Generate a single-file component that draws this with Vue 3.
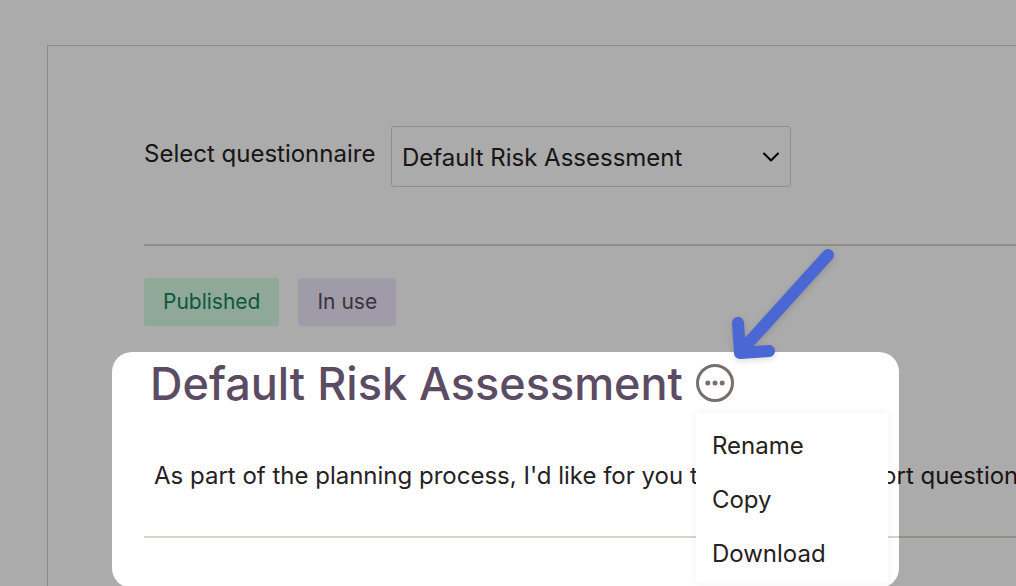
<script setup>
import { ref } from "vue";

const questionnaires = ["Default Risk Assessment"];
const selected = ref(questionnaires[0]);
const menuOpen = ref(true);
const actions = ["Rename", "Copy", "Download"];
</script>

<template>
  <main class="page">
    <div class="card">
      <div class="picker">
        <label class="picker-label" for="questionnaire">Select questionnaire</label>
        <div class="select-wrap">
          <select id="questionnaire" v-model="selected" class="select">
            <option v-for="name in questionnaires" :key="name">{{ name }}</option>
          </select>
          <svg class="chevron" viewBox="0 0 18 12" aria-hidden="true">
            <path d="M2 2.5 L9 9.5 L16 2.5" />
          </svg>
        </div>
      </div>

      <hr class="divider" />

      <div class="tags">
        <span class="tag tag-published">Published</span>
        <span class="tag tag-used">In use</span>
      </div>

      <section class="details">
        <div class="title-row">
          <h1 class="title">{{ selected }}</h1>
          <div class="more">
            <button type="button" class="more-btn" aria-label="More actions" :aria-expanded="menuOpen"
              @click="menuOpen = !menuOpen">
              <svg viewBox="0 0 38 38" aria-hidden="true">
                <circle class="ring" cx="19" cy="19" r="17.5" />
                <circle cx="11.8" cy="19" r="2.5" />
                <circle cx="19" cy="19" r="2.5" />
                <circle cx="26.2" cy="19" r="2.5" />
              </svg>
            </button>
            <ul v-if="menuOpen" class="menu">
              <li v-for="action in actions" :key="action">
                <button type="button" class="menu-item">{{ action }}</button>
              </li>
            </ul>
            <svg class="arrow" viewBox="0 0 112 120" aria-hidden="true">
              <path d="M98 14 L12 109 M8 82 L10 112 L39 110" />
            </svg>
          </div>
        </div>
        <p class="intro">As part of the planning process, I'd like for you to answer this short questionnaire</p>
        <hr class="divider" />
        <div class="spotlight"></div>
      </section>
    </div>
  </main>
</template>

<style>
body {
  margin: 0;
}
</style>

<style scoped>
.page {
  box-sizing: border-box;
  height: 100vh;
  padding: 45px 0 0 47px;
  overflow: hidden;
  background: #fff;
  color: #262122;
  font-family: Inter, "Liberation Sans", sans-serif;
  font-size: 24px;
}

.card {
  min-height: 100%;
  padding: 80px 0 0 96px;
  border-top: 1px solid #d3d1c7;
  border-left: 1px solid #d3d1c7;
}

.picker {
  display: flex;
  align-items: center;
  gap: 12px;
}

.picker-label {
  flex: 0 0 235px;
  padding-bottom: 6px;
  white-space: nowrap;
}

.select-wrap {
  position: relative;
  flex: 0 1 400px;
}

.select {
  appearance: none;
  box-sizing: border-box;
  width: 100%;
  height: 61px;
  padding: 2px 48px 0 10px;
  border: 1px solid #dbd2c9;
  border-radius: 3px;
  background: #fff;
  color: inherit;
  font: inherit;
}

.chevron {
  position: absolute;
  top: 25px;
  right: 11px;
  width: 18px;
  height: 12px;
  fill: none;
  stroke: #000;
  stroke-width: 2;
  stroke-linecap: round;
  stroke-linejoin: round;
  pointer-events: none;
}

.divider {
  height: 2px;
  margin: 0;
  border: none;
  background: #d9d2c8;
}

.picker + .divider {
  margin-top: 57px;
}

.tags {
  display: flex;
  gap: 19px;
  margin: 32px 0 26px;
  font-size: 21px;
}

.tag {
  padding: 0 19px;
  border-radius: 3px;
  line-height: 48px;
}

.tag-published {
  background: #d5fbe3;
  color: #13835f;
}

.tag-used {
  background: #ede7fb;
  color: #5a4b57;
}

.details {
  position: relative;
  padding-bottom: 50px;
}

.title-row {
  display: flex;
  align-items: center;
  gap: 13px;
  height: 62px;
  padding-left: 6px;
}

.title {
  margin: 0;
  color: #5b4b63;
  font-size: 45px;
  font-weight: 500;
  white-space: nowrap;
}

.more {
  position: relative;
  width: 38px;
  height: 38px;
}

.more-btn {
  display: block;
  width: 38px;
  height: 38px;
  padding: 0;
  border: none;
  background: none;
  cursor: pointer;
}

.more-btn svg {
  display: block;
  fill: #766f6b;
}

.more-btn .ring {
  fill: none;
  stroke: #766f6b;
  stroke-width: 3;
}

.menu {
  position: absolute;
  z-index: 1;
  top: 49px;
  left: 0;
  width: 192px;
  margin: 0;
  padding: 4px 0;
  border-radius: 3px;
  background: #fff;
  box-shadow: 0 0 10px rgba(0, 0, 0, 0.06);
  list-style: none;
}

.menu-item {
  display: block;
  width: 100%;
  height: 54px;
  padding: 2px 16px 0;
  border: none;
  background: none;
  color: inherit;
  font: inherit;
  text-align: left;
  cursor: pointer;
}

.arrow {
  position: absolute;
  z-index: 3;
  top: -123px;
  left: 34px;
  width: 112px;
  height: 120px;
  fill: none;
  stroke: #4a67d3;
  stroke-width: 12;
  stroke-linecap: round;
  stroke-linejoin: round;
  filter: drop-shadow(0 2px 3px rgba(0, 0, 0, 0.15));
  pointer-events: none;
}

.intro {
  margin: 43px 0 41px;
  padding-left: 10px;
  line-height: 38px;
  white-space: nowrap;
}

/* clear window over the title, everything around it is dimmed */
.spotlight {
  position: absolute;
  z-index: 2;
  top: 0;
  bottom: 0;
  left: -32px;
  width: 787px;
  border-radius: 20px;
  box-shadow: 0 0 0 2000px rgba(0, 0, 0, 0.33);
  pointer-events: none;
}
</style>
